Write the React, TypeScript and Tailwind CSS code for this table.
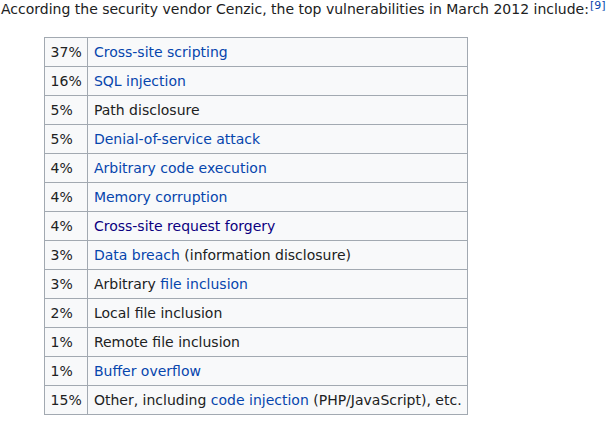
import React from 'react';

type Part = { text: string; href?: 'link' | 'visited' };

const rows: { pct: string; parts: Part[] }[] = [
  { pct: '37%', parts: [{ text: 'Cross-site scripting', href: 'link' }] },
  { pct: '16%', parts: [{ text: 'SQL injection', href: 'link' }] },
  { pct: '5%', parts: [{ text: 'Path disclosure' }] },
  { pct: '5%', parts: [{ text: 'Denial-of-service attack', href: 'link' }] },
  { pct: '4%', parts: [{ text: 'Arbitrary code execution', href: 'link' }] },
  { pct: '4%', parts: [{ text: 'Memory corruption', href: 'link' }] },
  { pct: '4%', parts: [{ text: 'Cross-site request forgery', href: 'visited' }] },
  { pct: '3%', parts: [{ text: 'Data breach', href: 'link' }, { text: ' (information disclosure)' }] },
  { pct: '3%', parts: [{ text: 'Arbitrary ' }, { text: 'file inclusion', href: 'link' }] },
  { pct: '2%', parts: [{ text: 'Local file inclusion' }] },
  { pct: '1%', parts: [{ text: 'Remote file inclusion' }] },
  { pct: '1%', parts: [{ text: 'Buffer overflow', href: 'link' }] },
  {
    pct: '15%',
    parts: [
      { text: 'Other, including ' },
      { text: 'code injection', href: 'link' },
      { text: ' (PHP/JavaScript), etc.' },
    ],
  },
];

export default function App() {
  return (
    <div className="w-[616px] h-[431px] overflow-hidden bg-white text-[#202122] text-[14px] leading-[1.6] font-['DejaVu_Sans',sans-serif]">
      <p className="-mt-[2px] pl-[1px] whitespace-nowrap">
        According the security vendor Cenzic, the top vulnerabilities in March 2012 include:
        <sup className="ml-[1px] text-[11px] leading-none text-[#0645ad] relative -top-[5px]">[9]</sup>
      </p>
      <table className="mt-[17px] ml-[44px] border-collapse bg-[#f8f9fa] border border-[#a2a9b1]">
        <tbody>
          {rows.map((r, i) => (
            <tr key={i}>
              <td className="border border-[#a2a9b1] px-[5.6px] py-[2.8px] whitespace-nowrap">{r.pct}</td>
              <td className="border border-[#a2a9b1] px-[5.6px] py-[2.8px] whitespace-nowrap">
                {r.parts.map((p, j) =>
                  p.href === 'link' ? (
                    <a key={j} className="text-[#0645ad]">{p.text}</a>
                  ) : p.href === 'visited' ? (
                    <a key={j} className="text-[#0b0080]">{p.text}</a>
                  ) : (
                    <span key={j}>{p.text}</span>
                  ),
                )}
              </td>
            </tr>
          ))}
        </tbody>
      </table>
    </div>
  );
}
